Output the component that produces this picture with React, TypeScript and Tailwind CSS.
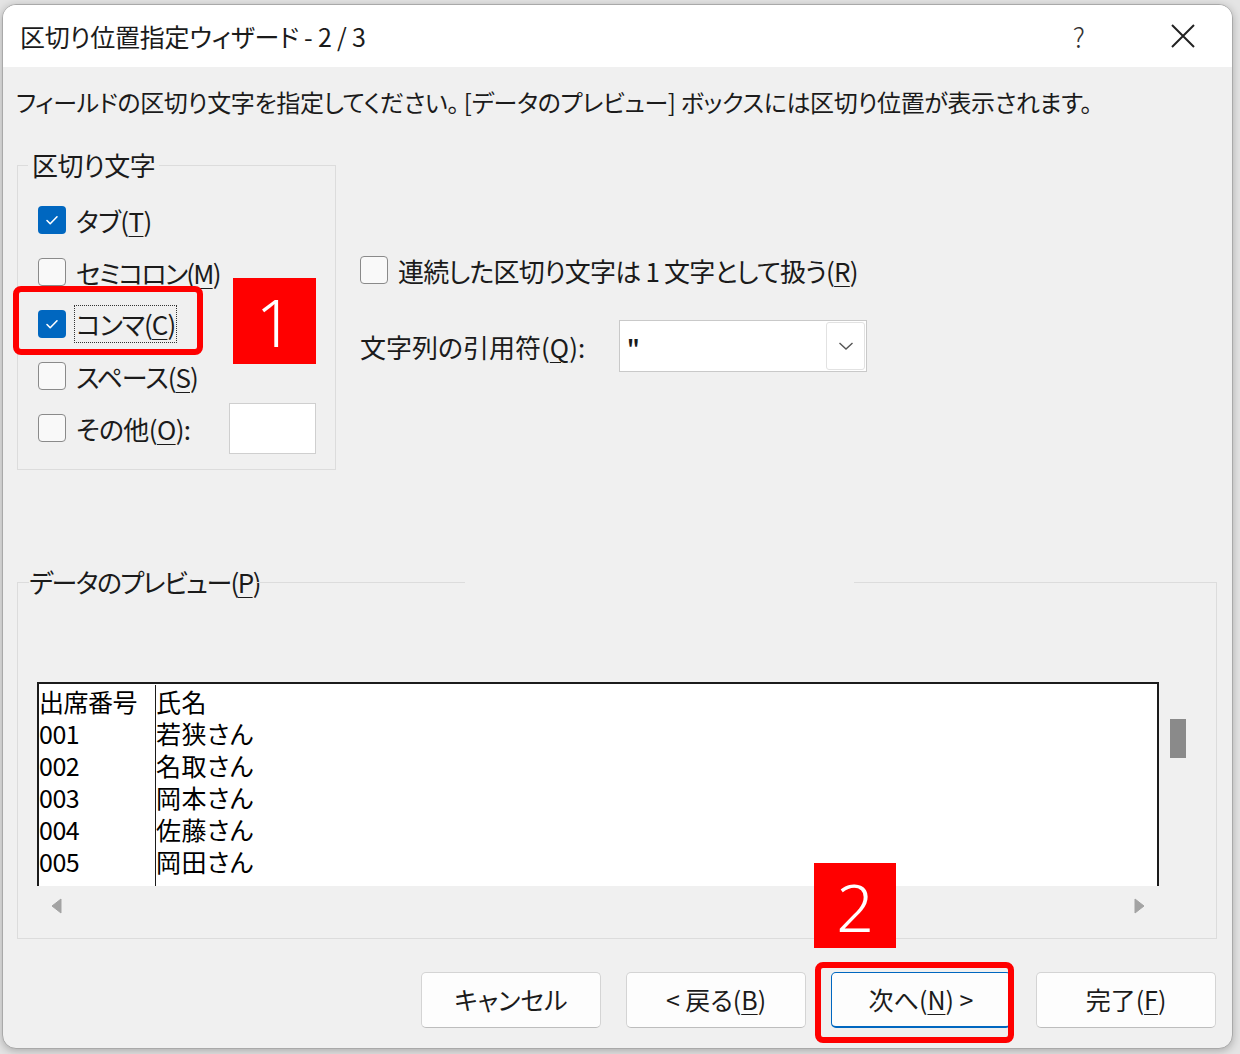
import React from "react";

const ui = "font-['Noto_Sans_CJK_JP','Noto_Sans',sans-serif] [font-feature-settings:'palt']";

function Mn({ children }: { children: React.ReactNode }) {
  // mnemonic letter, underlined like the Windows access key
  return <span className="underline decoration-1 underline-offset-[4px]">{children}</span>;
}

function CheckBox({ checked }: { checked?: boolean }) {
  if (checked) {
    return (
      <span className="flex h-[28px] w-[28px] shrink-0 items-center justify-center rounded-[4px] bg-[#0067c0]">
        <svg width="16" height="16" viewBox="0 0 16 16" fill="none">
          <path d="M3 8.5l3.2 3.2L13 4.8" stroke="white" strokeWidth="1.6" strokeLinecap="round" strokeLinejoin="round" />
        </svg>
      </span>
    );
  }
  return <span className="h-[28px] w-[28px] shrink-0 rounded-[4px] border-[1.5px] border-[#8a8a8a] bg-[#f9f9f9]" />;
}

function Btn({ children, focused }: { children: React.ReactNode; focused?: boolean }) {
  return (
    <button
      className={
        focused
          ? "flex h-[56px] w-[180px] items-center justify-center rounded-[5px] border border-b-2 border-[#0067c0] bg-[#fdfdfd] text-[25px] text-[#1b1b1b]"
          : "flex h-[56px] w-[180px] items-center justify-center rounded-[5px] border border-[#d4d4d4] border-b-[#bdbdbd] bg-[#fdfdfd] text-[25px] text-[#1b1b1b]"
      }
    >
      {children}
    </button>
  );
}

const rows = [
  ["出席番号", "氏名"],
  ["001", "若狭さん"],
  ["002", "名取さん"],
  ["003", "岡本さん"],
  ["004", "佐藤さん"],
  ["005", "岡田さん"],
];

export default function App() {
  return (
    <div className={`relative h-[1054px] w-[1240px] overflow-hidden bg-[#e4e4e4] pl-[2px] pt-[4px] ${ui}`}>
      <div className="flex h-[1045px] w-[1231px] flex-col overflow-hidden rounded-[14px] border border-[#a9a9a9] bg-[#f0f0f0] text-[#1b1b1b] shadow-[0_2px_8px_rgba(0,0,0,0.25)]">
        {/* title bar */}
        <div className="flex h-[62px] shrink-0 items-center bg-white pl-[17px]">
          <span className="text-[25px] leading-none tracking-[-0.2px]">区切り位置指定ウィザード - 2 / 3</span>
          <span className="ml-auto mr-[85px] text-[27px] font-light leading-none text-[#333]">?</span>
          <svg className="mr-[36px]" width="26" height="26" viewBox="0 0 26 26">
            <path d="M2 2L24 24M24 2L2 24" stroke="#222" strokeWidth="2" />
          </svg>
        </div>

        {/* body */}
        <div className="flex flex-1 flex-col">
          <p className="mt-[19px] pl-[13px] text-[24px] leading-[32px] tracking-[-0.35px]">
            フィールドの区切り文字を指定してください。 [データのプレビュー] ボックスには区切り位置が表示されます。
          </p>

          <div className="mt-[31px] flex">
            <fieldset className="ml-[14px] h-[321px] w-[319px] border border-[#dcdcdc]">
              <legend className="ml-[10px] px-[4px] text-[26px] leading-[32px] tracking-[-0.5px]">区切り文字</legend>
              <div className="mt-[13px] flex flex-col pl-[20px] text-[26px] tracking-[-0.6px]">
                <label className="flex h-[52px] items-center gap-[10px]">
                  <CheckBox checked />
                  <span>タブ(<Mn>T</Mn>)</span>
                </label>
                <label className="flex h-[52px] items-center gap-[10px]">
                  <CheckBox />
                  <span className="tracking-[-1.8px]">セミコロン(<Mn>M</Mn>)</span>
                </label>
                <label className="flex h-[52px] items-center gap-[8px]">
                  <CheckBox checked />
                  <span className="border border-dotted border-[#333] px-[1px] leading-[36px] tracking-[-1px]">
                    コンマ(<Mn>C</Mn>)
                  </span>
                </label>
                <label className="flex h-[52px] items-center gap-[10px]">
                  <CheckBox />
                  <span className="tracking-[-1px]">スペース(<Mn>S</Mn>)</span>
                </label>
                <label className="flex h-[52px] items-center gap-[10px] pr-[19px]">
                  <CheckBox />
                  <span>その他(<Mn>O</Mn>):</span>
                  <span className="ml-auto h-[51px] w-[87px] border border-[#cfcfcf] bg-white" />
                </label>
              </div>
            </fieldset>

            <div className="ml-[24px] flex flex-col text-[26px]">
              <label className="mt-[107px] flex h-[28px] items-center gap-[10px]">
                <CheckBox />
                <span className="tracking-[-0.8px]">
                  連続した区切り文字は 1 文字として扱う(<Mn>R</Mn>)
                </span>
              </label>
              <div className="mt-[36px] flex items-center">
                <span className="w-[259px]">
                  文字列の引用符(<Mn>Q</Mn>):
                </span>
                <div className="flex h-[52px] w-[248px] items-center border border-[#c9c9c9] bg-white">
                  <span className="ml-[7px] text-[22px] font-bold">"</span>
                  <span className="ml-auto mr-[1px] flex h-[48px] w-[39px] items-center justify-center rounded-[3px] border border-[#e2e2e2]">
                    <svg width="16" height="10" viewBox="0 0 16 10">
                      <path d="M1.5 2l6.5 6 6.5-6" stroke="#555" strokeWidth="1.4" fill="none" />
                    </svg>
                  </span>
                </div>
              </div>
            </div>
          </div>

          {/* preview group */}
          <div className="ml-[14px] mt-[96px] w-[1200px]">
            <div className="flex h-[32px] items-start">
              <div className="mt-[16px] h-[16px] w-[12px] border-l border-t border-[#dcdcdc]" />
              <span className="w-[228px] whitespace-nowrap text-[26px] leading-[32px] tracking-[-1.6px]">
                データのプレビュー(<Mn>P</Mn>)
              </span>
              <div className="mt-[16px] h-[16px] w-[208px] border-t border-[#dcdcdc]" />
              <div className="w-[389px]" />
              <div className="mt-[16px] h-[16px] flex-1 border-r border-t border-[#dcdcdc]" />
            </div>
            <div className="h-[341px] border-x border-b border-[#dcdcdc] pl-[19px] pt-[84px]">
              <div className="flex">
                <div className="flex h-[204px] w-[1122px] border-x-2 border-t-2 border-[#1b1b1b] bg-white pt-[1px] text-[25px] leading-[32px] text-black">
                  <div className="w-[117px] border-r-[1.5px] border-[#1b1b1b]">
                    {rows.map((r) => (
                      <div key={r[0]} className="tracking-[-0.5px]">
                        {r[0]}
                      </div>
                    ))}
                  </div>
                  <div>
                    {rows.map((r) => (
                      <div key={r[1]} className="tracking-[0.5px]">
                        {r[1]}
                      </div>
                    ))}
                  </div>
                </div>
                <div className="ml-[11px] mt-[37px] h-[39px] w-[16px] bg-[#8a8a8a]" />
              </div>
              <div className="flex h-[40px] w-[1122px] items-center px-[13px]">
                <svg width="12" height="16" viewBox="0 0 12 16">
                  <path d="M11 1L2 8l9 7z" fill="#a3a3a3" stroke="#a3a3a3" strokeLinejoin="round" />
                </svg>
                <svg className="ml-auto" width="12" height="16" viewBox="0 0 12 16">
                  <path d="M1 1l9 7-9 7z" fill="#a3a3a3" stroke="#a3a3a3" strokeLinejoin="round" />
                </svg>
              </div>
            </div>
          </div>

          {/* buttons */}
          <div className="mt-[33px] flex justify-end gap-[25px] pr-[16px]">
            <Btn>キャンセル</Btn>
            <Btn>
              &lt; 戻る(<Mn>B</Mn>)
            </Btn>
            <Btn focused>
              次へ(<Mn>N</Mn>) &gt;
            </Btn>
            <Btn>
              完了(<Mn>F</Mn>)
            </Btn>
          </div>
        </div>
      </div>

      {/* red callouts */}
      <div className="absolute left-[13px] top-[286px] h-[69px] w-[190px] rounded-[8px] border-[6px] border-[#ff0000]" />
      <div className="absolute left-[233px] top-[278px] flex h-[86px] w-[83px] items-center justify-center bg-[#ff0000] font-['Noto_Sans',sans-serif] text-[66px] font-light leading-none text-white">
        1
      </div>
      <div className="absolute left-[814px] top-[863px] flex h-[85px] w-[82px] items-center justify-center bg-[#ff0000] font-['Noto_Sans',sans-serif] text-[66px] font-light leading-none text-white">
        2
      </div>
      <div className="absolute left-[815px] top-[962px] h-[81px] w-[199px] rounded-[8px] border-[6px] border-[#ff0000]" />
    </div>
  );
}
